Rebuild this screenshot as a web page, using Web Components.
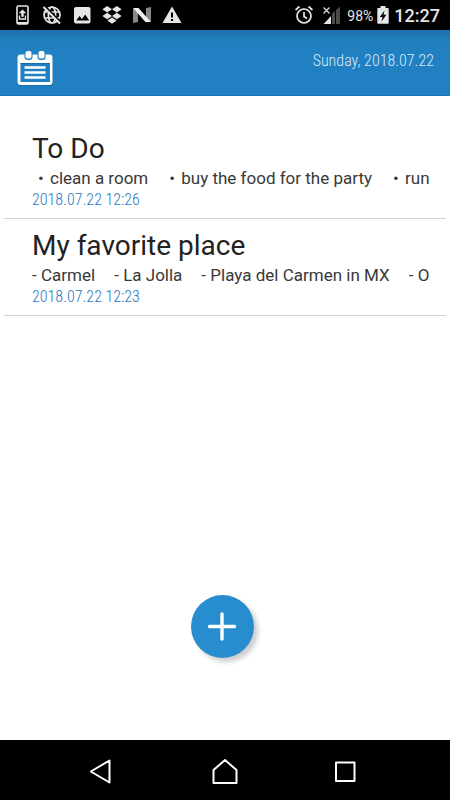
<!DOCTYPE html>
<html lang="en">
<head>
<meta charset="utf-8">
<meta name="viewport" content="width=device-width, initial-scale=1">
<title>Notes</title>
<style>
html, body { height: 100%; margin: 0; }
body { font-family: Roboto, "Liberation Sans", sans-serif; background: #fff; color: #222; }
</style>
</head>
<body>
<memo-screen>
  <status-bar slot="status" battery="98%" time="12:27"></status-bar>
  <app-header slot="header">Sunday, 2018.07.22</app-header>
  <memo-note date="2018.07.22 12:26" bulleted>
    <span slot="title">To Do</span>
    <note-item mark="•">clean a room</note-item>
    <note-item mark="•">buy the food for the party</note-item>
    <note-item mark="•">run</note-item>
  </memo-note>
  <memo-note date="2018.07.22 12:23">
    <span slot="title">My favorite place</span>
    <note-item mark="-">Carmel</note-item>
    <note-item mark="-">La Jolla</note-item>
    <note-item mark="-">Playa del Carmen in MX</note-item>
    <note-item mark="-">O</note-item>
  </memo-note>
  <add-button slot="action"></add-button>
  <nav-bar slot="nav"></nav-bar>
</memo-screen>

<script>
const define = (name, html) => customElements.define(name, class extends HTMLElement {
  constructor() {
    super();
    const t = document.createElement('template');
    t.innerHTML = html;
    this.attachShadow({ mode: 'open' }).append(t.content.cloneNode(true));
  }
  connectedCallback() {
    this.shadowRoot.querySelectorAll('[data-attr]').forEach(el => {
      el.textContent = this.getAttribute(el.dataset.attr) || '';
    });
  }
});

define('memo-screen', `
<style>
:host { display: flex; flex-direction: column; min-height: 100vh; }
main { flex: 1; display: flex; flex-direction: column; padding: 26px 4px 0; min-width: 0; }
.action { display: flex; justify-content: center; margin-top: auto; padding-bottom: 82px; }
</style>
<slot name="status"></slot>
<slot name="header"></slot>
<main><slot></slot><div class="action"><slot name="action"></slot></div></main>
<slot name="nav"></slot>`);

define('status-bar', `
<style>
:host { display: flex; justify-content: space-between; align-items: center; height: 30px; padding: 0 10px 0 14px; background: #000; color: #e6e6e6; }
div { display: flex; align-items: center; }
.left { gap: 10px; }
svg { display: block; flex: none; }
.pct { font-size: 14px; line-height: 20px; margin: 2px 4px 0 6px; }
.time { font-size: 18px; line-height: 24px; font-weight: 500; margin: 1px 0 0 5px; }
.signal { margin-left: 8px; }
</style>
<div class="left">
  <svg width="18" height="20" viewBox="0 0 18 20"><rect x="3" y="1" width="11" height="18" rx="1.5" fill="none" stroke="#e6e6e6" stroke-width="1.6"/><path d="M3 17h11v2H3z" fill="#e6e6e6"/><path d="M8.5 4.500 4.700 8.300h2.600v3.500h2.400V8.300h2.600z" fill="#e6e6e6"/><path d="M5.500 10.500v3.500h6v-3.500" fill="none" stroke="#e6e6e6" stroke-width="1.300"/></svg>
  <svg width="20" height="20" viewBox="0 0 20 20" fill="none" stroke="#e6e6e6" stroke-width="1.700"><circle cx="10" cy="10" r="8"/><ellipse cx="10" cy="10" rx="3.600" ry="8"/><path d="M3 7h14M3 13h14"/><path d="M3 1.500 19 17.500" stroke="#000" stroke-width="2"/><path d="M1.500 2 18 18.500" stroke-width="2"/></svg>
  <svg width="20" height="20" viewBox="0 0 20 20"><rect x="2" y="2" width="16.500" height="16.500" rx="2" fill="#e6e6e6"/><path d="M4.300 15.500 7.500 11l2.500 3 3.200-4.500 4 6z" fill="#000"/></svg>
  <svg width="20" height="20" viewBox="0 0 20 20" fill="#e6e6e6"><path d="m5.200 1 4.800 3.200-4.800 3.200L.4 4.200zM14.800 1l4.800 3.200-4.800 3.200L10 4.200zM5.200 7.800l4.800 3.200-4.800 3.200L.4 11zM14.800 7.800l4.800 3.200-4.800 3.200L10 11zM10 12.600l4.600 3L10 18.800l-4.600-3.200z"/></svg>
  <svg width="20" height="20" viewBox="0 0 20 20"><path d="M1 4l5-1v14l-5 1zM14 3l5-1v14l-5 1z" fill="#888"/><path d="M1 3h5.500L19 17h-5.500z" fill="#f0f0f0"/></svg>
  <svg width="20" height="20" viewBox="0 0 20 20"><path d="M10 1.500 19.500 18H.5z" fill="#e6e6e6"/><path d="M9 7.500h2v5H9zM9 14h2v2H9z" fill="#000"/></svg>
</div>
<div>
  <svg width="20" height="20" viewBox="0 0 20 20" fill="none" stroke="#e6e6e6" stroke-width="1.700"><circle cx="10" cy="11" r="7"/><path d="M10 7v4.500l3 2M1.500 5l4-3.500M14.500 1.500l4 3.500"/></svg>
  <svg class="signal" width="19" height="20" viewBox="0 0 19 20"><path d="M4 16.500 9 11v8H1.500z" fill="#e6e6e6"/><path d="M10 8.500 13 6v13h-3zM14 5l4-3.500V19h-4z" fill="#4b4b4b"/><path d="m1.500 2.500 6 6m0-6-6 6" stroke="#ddd" stroke-width="1.200"/></svg>
  <span class="pct" data-attr="battery"></span>
  <svg width="12" height="20" viewBox="0 0 12 20"><path d="M3.500 1h5v2H11q.7 0 .7.700V18q0 .8-.7.800H1q-.7 0-.7-.8V3.700Q.3 3 1 3h2.500z" fill="#e6e6e6"/><path d="M7.500 5.500 2.800 12H5.500l-1 4.500L9.400 9.700H6.500z" fill="#000"/></svg>
  <span class="time" data-attr="time"></span>
</div>`);

define('app-header', `
<style>
:host { display: block; color: #d9ebf8; background: linear-gradient(#1f70aa, #217cba 8px, #2180c1 20px); border-bottom: 1px solid #1a6fae; }
header { display: flex; justify-content: space-between; align-items: flex-start; padding: 20px 16px 9px; }
svg { display: block; }
time { font: 300 16px/22px "Roboto Condensed", "Liberation Sans Narrow", Roboto, sans-serif; }
</style>
<header>
  <svg width="38" height="36" viewBox="0 0 38 36"><rect x="1" y="5" width="36" height="31" rx="3" fill="#0b4374" opacity=".3"/><rect x="1.500" y="4.500" width="35" height="30.500" rx="3" fill="#fff"/><path d="M4.500 13h29.500v19H4.500z" fill="#2180c1"/><path d="M4.500 13.500h29.500" stroke="#176caa"/><path d="M8.500 17.500h21M8.500 22.500h21M8.500 27.500h21" stroke="#fff" stroke-width="2.400"/><rect x="8.500" y="1" width="8" height="9" rx="3" fill="#2180c1"/><rect x="21.500" y="1" width="8" height="9" rx="3" fill="#2180c1"/><rect x="9.500" y="1" width="6" height="7.500" rx="2" fill="#fff"/><rect x="22.500" y="1" width="6" height="7.500" rx="2" fill="#fff"/></svg>
  <time><slot></slot></time>
</header>`);

define('memo-note', `
<style>
:host { display: block; border-bottom: 1px solid #d2d2d2; }
article { padding: 9px 17px 8px 28px; }
h2 { margin: 0; font-size: 28px; line-height: 36px; font-weight: 400; color: #222; }
.items { display: flex; gap: 19px; overflow: hidden; font-size: 17px; line-height: 22px; color: #383838; }
:host([bulleted]) .items { --mark-width: 12px; padding-left: 6px; gap: 21px; }
time { display: block; color: #1f78c0; font: 300 16px/21px "Roboto Condensed", "Liberation Sans Narrow", Roboto, sans-serif; }
</style>
<article>
  <h2><slot name="title"></slot></h2>
  <div class="items"><slot></slot></div>
  <time data-attr="date"></time>
</article>`);

define('note-item', `
<style>
:host { display: flex; flex: none; white-space: nowrap; }
span { flex: none; width: var(--mark-width, 9px); }
</style>
<span data-attr="mark"></span><slot></slot>`);

define('add-button', `
<style>
:host { display: block; padding-right: 5px; }
button { display: grid; place-items: center; width: 63px; height: 63px; padding: 0; border: 0; border-radius: 50%; background: #278dce; box-shadow: 4px 4px 5px rgba(0,0,0,.2); }
</style>
<button aria-label="Add note"><svg width="31" height="31" viewBox="0 0 31 31"><path d="M15 3v25M2.500 15.500h25" stroke="#fff" stroke-width="3.400" stroke-linecap="round"/></svg></button>`);

define('nav-bar', `
<style>
:host { display: block; background: #000; }
nav { display: flex; justify-content: center; align-items: center; gap: 80px; height: 60px; padding-top: 2px; box-sizing: border-box; }
button { display: block; width: 40px; height: 40px; padding: 0; border: 0; background: none; }
svg { display: block; margin: auto; fill: none; stroke: #fff; stroke-width: 2; stroke-linejoin: round; }
</style>
<nav>
  <button aria-label="Back"><svg width="30" height="30" viewBox="0 0 30 30"><path d="M19.500 4.500v22L.8 15.500z"/></svg></button>
  <button aria-label="Home"><svg width="30" height="30" viewBox="0 0 30 30"><path d="M15 4 26.500 14V27h-23V14z"/></svg></button>
  <button aria-label="Recent apps"><svg width="30" height="30" viewBox="0 0 30 30"><rect x="6" y="6.500" width="18.500" height="18.500"/></svg></button>
</nav>`);
</script>
</body>
</html>
